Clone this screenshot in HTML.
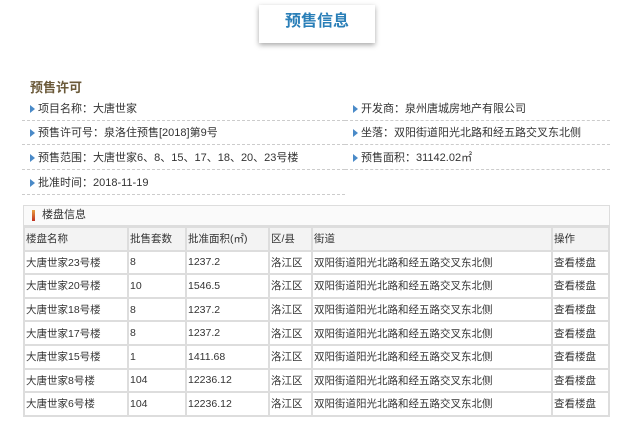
<!DOCTYPE html>
<html><head><meta charset="utf-8"><style>
*{margin:0;padding:0;box-sizing:border-box}
body{width:625px;height:428px;background:#fff;font-family:"Liberation Sans","Noto Sans CJK SC",sans-serif;font-size:11px;color:#333;position:relative;overflow:hidden}
.banner{position:absolute;left:259px;top:5px;width:116px;height:38px;background:#fff;box-shadow:0 2px 5px rgba(0,0,0,.35);text-align:center;line-height:34px;font-size:16px;font-weight:bold;color:#2a7fb8}
.t1{position:absolute;left:30px;top:77px;font-size:13px;font-weight:bold;color:#6b5a3a}
.row{position:absolute;height:24px;line-height:24px;border-bottom:1px dashed #ccc}
.row span.ar{display:inline-block;width:0;height:0;border-left:5px solid #4a8ac8;border-top:4px solid transparent;border-bottom:4px solid transparent;margin-right:3px;vertical-align:-1px}
.hd{position:absolute;left:23px;top:205px;width:587px;height:21px;border:1px solid #ddd;background:#fafafa;line-height:19px;padding-left:18px;font-size:11px}
.hd i{position:absolute;left:8px;top:4px;width:3px;height:11px;background:linear-gradient(#e8a040,#c03020)}
table{position:absolute;left:23px;top:226px;width:587px;border-collapse:collapse}
td{border:2px solid #ddd;height:23.6px;padding:0 1px;font-size:10.5px;white-space:nowrap}
tr:first-child td{background:#f3f3f3}
</style></head><body>
<div class="banner">预售信息</div>
<div class="t1">预售许可</div>
<div class="row" style="left:22px;top:97px;width:323px"><span class="ar" style="margin-left:8px"></span>项目名称：大唐世家</div>
<div class="row" style="left:345px;top:97px;width:265px"><span class="ar" style="margin-left:8px"></span>开发商：泉州唐城房地产有限公司</div>
<div class="row" style="left:22px;top:121px;width:323px"><span class="ar" style="margin-left:8px"></span>预售许可号：泉洛住预售[2018]第9号</div>
<div class="row" style="left:345px;top:121px;width:265px"><span class="ar" style="margin-left:8px"></span>坐落：双阳街道阳光北路和经五路交叉东北侧</div>
<div class="row" style="left:22px;top:146px;width:323px"><span class="ar" style="margin-left:8px"></span>预售范围：大唐世家6、8、15、17、18、20、23号楼</div>
<div class="row" style="left:345px;top:146px;width:265px"><span class="ar" style="margin-left:8px"></span>预售面积：31142.02㎡</div>
<div class="row" style="left:22px;top:171px;width:323px"><span class="ar" style="margin-left:8px"></span>批准时间：2018-11-19</div>
<div class="hd"><i></i>楼盘信息</div>
<table>
<tr><td style="width:104px">楼盘名称</td><td style="width:58px">批售套数</td><td style="width:83px">批准面积(㎡)</td><td style="width:43px">区/县</td><td style="width:240px">街道</td><td>操作</td></tr>
<tr><td>大唐世家23号楼</td><td>8</td><td>1237.2</td><td>洛江区</td><td>双阳街道阳光北路和经五路交叉东北侧</td><td>查看楼盘</td></tr>
<tr><td>大唐世家20号楼</td><td>10</td><td>1546.5</td><td>洛江区</td><td>双阳街道阳光北路和经五路交叉东北侧</td><td>查看楼盘</td></tr>
<tr><td>大唐世家18号楼</td><td>8</td><td>1237.2</td><td>洛江区</td><td>双阳街道阳光北路和经五路交叉东北侧</td><td>查看楼盘</td></tr>
<tr><td>大唐世家17号楼</td><td>8</td><td>1237.2</td><td>洛江区</td><td>双阳街道阳光北路和经五路交叉东北侧</td><td>查看楼盘</td></tr>
<tr><td>大唐世家15号楼</td><td>1</td><td>1411.68</td><td>洛江区</td><td>双阳街道阳光北路和经五路交叉东北侧</td><td>查看楼盘</td></tr>
<tr><td>大唐世家8号楼</td><td>104</td><td>12236.12</td><td>洛江区</td><td>双阳街道阳光北路和经五路交叉东北侧</td><td>查看楼盘</td></tr>
<tr><td>大唐世家6号楼</td><td>104</td><td>12236.12</td><td>洛江区</td><td>双阳街道阳光北路和经五路交叉东北侧</td><td>查看楼盘</td></tr>
</table>
</body></html>
